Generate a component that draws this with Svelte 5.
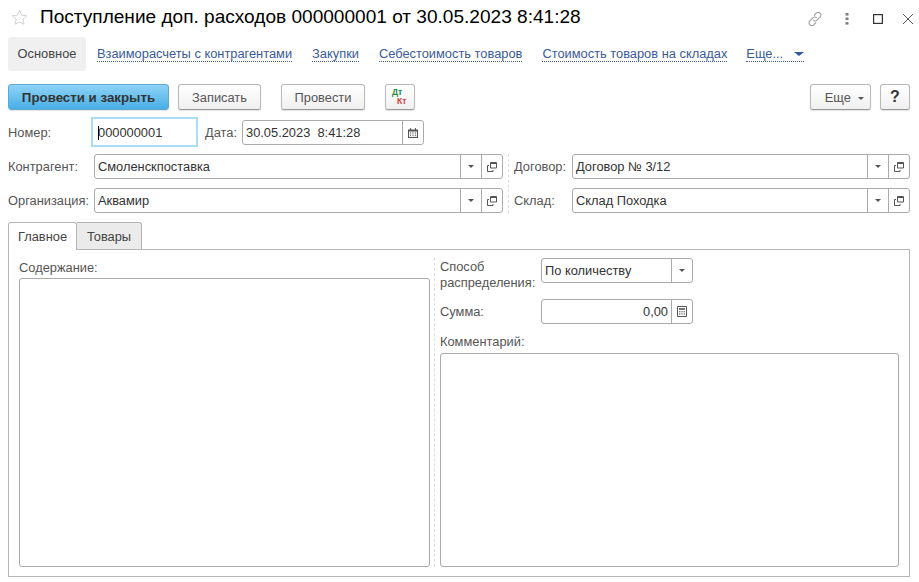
<script>
  const links = ['Взаиморасчеты с контрагентами', 'Закупки', 'Себестоимость товаров', 'Стоимость товаров на складах']
</script>

<main class="page">
  <header class="title-bar">
    <svg class="star" width="17" height="17" viewBox="0 0 18 18"><path d="M9 1.5l2.2 5.1 5.5.5-4.2 3.6 1.3 5.4L9 13.7l-4.8 2.4 1.3-5.4L1.3 7.1l5.5-.5z" fill="none" stroke="#cfcfcf"/></svg>
    <h1>Поступление доп. расходов 000000001 от 30.05.2023 8:41:28</h1>
    <div class="win-icons">
      <svg width="16" height="16" viewBox="0 0 16 16" fill="none" stroke="#a0a0a0" stroke-width="1.1"><path d="M7 4.5l2.3-2.4a2.6 2.6 0 0 1 3.7 0 2.6 2.6 0 0 1 .3 3.7L10 9.2a2.6 2.6 0 0 1-3.7 0"/><path d="M9 11.5l-2.3 2.4a2.6 2.6 0 0 1-3.7 0 2.6 2.6 0 0 1-.3-3.7L6 6.8a2.6 2.6 0 0 1 3.7 0"/></svg>
      <svg class="dots" width="4" height="12" viewBox="0 0 4 12" fill="#808080"><rect x="0.5" y="0" width="3" height="2.6"/><rect x="0.5" y="4.5" width="3" height="2.6"/><rect x="0.5" y="9" width="3" height="2.6"/></svg>
      <svg class="maxi" width="10" height="10" viewBox="0 0 10 10" fill="none" stroke="#333" stroke-width="1.2"><rect x="0.6" y="0.6" width="8.8" height="8.8"/></svg>
      <svg class="close" width="10" height="10" viewBox="0 0 10 10" stroke="#555" stroke-width="1"><path d="M0 0l10 10M10 0L0 10"/></svg>
    </div>
  </header>

  <nav class="sections">
    <span class="section active">Основное</span>
    {#each links as link}
      <a class="section" href="#top">{link}</a>
    {/each}
    <a class="section more" href="#top">Еще... <i class="more-arrow"></i></a>
  </nav>

  <div class="toolbar">
    <button class="btn primary">Провести и закрыть</button>
    <button class="btn">Записать</button>
    <button class="btn post">Провести</button>
    <button class="btn dtkt"><span class="dt">Дт</span><span class="kt">Кт</span></button>
    <span class="spacer"></span>
    <button class="btn extra">Еще <i class="caret"></i></button>
    <button class="btn help">?</button>
  </div>

  <div class="row number-row">
    <span class="label number-label">Номер:</span>
    <div class="number-input"><i class="cursor"></i>000000001</div>
    <span class="label date-label">Дата:</span>
    <div class="field date-field">
      <span class="value">30.05.2023&nbsp; 8:41:28</span>
      <span class="cell">
        <svg width="10" height="10" viewBox="0 0 10 10"><path d="M0 1.5h10V10H0z" fill="#555"/><path d="M2 0h1v2H2zM7 0h1v2H7z" fill="#555"/><path d="M1 3.5h8V9H1z" fill="#eee"/><path d="M2 4.5h1v1H2zM4.5 4.5h1v1h-1zM7 4.5h1v1H7zM2 6.8h1v1H2zM4.5 6.8h1v1h-1zM7 6.8h1v1H7z" fill="#555"/></svg>
      </span>
    </div>
  </div>

  <div class="header-grid">
    <div class="header-col left">
      {#each [['Контрагент:', 'Смоленскпоставка'], ['Организация:', 'Аквамир']] as [label, value]}
        <div class="row">
          <span class="label wide">{label}</span>
          <div class="field grow">
            <span class="value">{value}</span>
            <span class="cell"><i class="caret"></i></span>
            <span class="cell">
              <svg width="10" height="10" viewBox="0 0 10 10" fill="none" stroke="#555"><path d="M3.5 .5h6v5.5h-6z"/><path d="M3.5 1.5h6"/><path d="M2 3.5H.5v6H6V8"/></svg>
            </span>
          </div>
        </div>
      {/each}
    </div>
    <div class="header-col right">
      {#each [['Договор:', 'Договор № 3/12'], ['Склад:', 'Склад Походка']] as [label, value]}
        <div class="row">
          <span class="label narrow">{label}</span>
          <div class="field grow">
            <span class="value">{value}</span>
            <span class="cell"><i class="caret"></i></span>
            <span class="cell">
              <svg width="10" height="10" viewBox="0 0 10 10" fill="none" stroke="#555"><path d="M3.5 .5h6v5.5h-6z"/><path d="M3.5 1.5h6"/><path d="M2 3.5H.5v6H6V8"/></svg>
            </span>
          </div>
        </div>
      {/each}
    </div>
  </div>

  <div class="tabs">
    <span class="tab current">Главное</span>
    <span class="tab">Товары</span>
  </div>

  <section class="panel">
    <div class="pane content-pane">
      <span class="label">Содержание:</span>
      <div class="area"></div>
    </div>
    <div class="pane side-pane">
      <div class="side-row method">
        <span class="label two-line lowered">Способ<br />распределения:</span>
        <div class="field short">
          <span class="value">По количеству</span>
          <span class="cell"><i class="caret"></i></span>
        </div>
      </div>
      <div class="side-row sum">
        <span class="label two-line">Сумма:</span>
        <div class="field short">
          <span class="value amount">0,00</span>
          <span class="cell calc">
            <svg width="10" height="11" viewBox="0 0 10 11"><path d="M.5.5h9v10h-9z" fill="#fff" stroke="#555"/><path d="M2 2h6v2H2z" fill="#777"/><path d="M2 5.3h1.4v1H2zM4.3 5.3h1.4v1H4.3zM6.6 5.3H8v1H6.6zM2 7.6h1.4v1H2zM4.3 7.6h1.4v1H4.3zM6.6 7.6H8v1H6.6z" fill="#555"/></svg>
          </span>
        </div>
      </div>
      <span class="label comment-label">Комментарий:</span>
      <div class="area"></div>
    </div>
  </section>
</main>

<style>
  :global(body) {
    background: #fff;
  }

  .page {
    width: 919px;
    height: 582px;
    box-sizing: border-box;
    padding: 0 9px 5px 8px;
    display: flex;
    flex-direction: column;
    overflow: hidden;
    font-family: "Liberation Sans", Arial, sans-serif;
    font-size: 12.85px;
    color: #333;
  }

  .title-bar {
    height: 37px;
    display: flex;
    align-items: center;
    flex: none;
  }

  .star {
    margin: 0 0 3px 3px;
  }

  h1 {
    margin: 0 0 3px 12px;
    font-size: 19.07px;
    font-weight: 400;
    color: #000;
    white-space: nowrap;
  }

  .win-icons {
    margin-left: auto;
    display: flex;
    align-items: center;
  }

  .dots {
    margin-left: 22px;
  }

  .maxi {
    margin-left: 24px;
  }

  .close {
    margin-left: 20px;
    margin-right: -3px;
  }

  .sections {
    height: 34px;
    display: flex;
    align-items: center;
    flex: none;
  }

  .section {
    color: #3a5a9b;
    text-decoration: none;
    border-bottom: 1px dotted #3a5a9b;
    line-height: 15px;
    margin-right: 20px;
    white-space: nowrap;
  }

  .section.active {
    height: 34px;
    line-height: 34px;
    width: 78px;
    text-align: center;
    background: #f0f0f0;
    border: none;
    border-radius: 3px;
    color: #444;
    margin-right: 11px;
  }

  .more {
    margin-right: 0;
    margin-left: -1px;
  }

  .more-arrow {
    display: inline-block;
    margin-left: 7px;
    vertical-align: 2px;
    border: 5px solid transparent;
    border-top: 4px solid #2c5aa8;
    border-bottom: 0;
  }

  .toolbar {
    display: flex;
    margin-top: 13px;
    height: 26px;
    flex: none;
  }

  .spacer {
    flex: 1;
  }

  .btn {
    box-sizing: border-box;
    height: 26px;
    padding: 0;
    font: inherit;
    color: #555;
    border: 1px solid #b9b9b9;
    border-bottom-color: #999;
    border-radius: 3px;
    background: linear-gradient(#fff, #f0f0f0);
    box-shadow: 0 1px 1px rgba(0, 0, 0, 0.12);
  }

  .primary {
    width: 161px;
    font-weight: 700;
    font-size: 13.3px;
    color: #333;
    border-color: #5da9cf;
    background: linear-gradient(#8ed3f7, #49afe6);
  }

  .primary + .btn {
    width: 83px;
    margin-left: 9px;
  }

  .post {
    width: 84px;
    margin-left: 20px;
  }

  .dtkt {
    width: 30px;
    margin-left: 20px;
    position: relative;
    font-size: 8.5px;
    font-weight: 700;
  }

  .dt {
    position: absolute;
    left: 6px;
    top: 4px;
    line-height: 7px;
    color: #1c8a3c;
  }

  .kt {
    position: absolute;
    left: 11px;
    top: 13px;
    line-height: 7px;
    color: #d23c3c;
  }

  .extra {
    width: 61px;
    padding-left: 8px;
  }

  .help {
    width: 30px;
    margin-left: 9px;
    font-size: 16px;
    font-weight: 700;
    color: #333;
  }

  .caret {
    display: inline-block;
    border: 3px solid transparent;
    border-top: 3px solid #555;
    border-bottom: 0;
    vertical-align: 2px;
  }

  .extra .caret {
    margin-left: 4px;
  }

  .row {
    display: flex;
    align-items: center;
    height: 25px;
  }

  .number-row {
    margin-top: 10px;
    flex: none;
  }

  .label {
    color: #555;
    line-height: 16px;
  }

  .number-label {
    width: 83px;
  }

  .number-input {
    box-sizing: border-box;
    width: 107px;
    height: 30px;
    margin: -3px 0 -2px;
    border: 2px solid #a9def5;
    padding-left: 5px;
    line-height: 28px;
    color: #333;
    position: relative;
  }

  .cursor {
    position: absolute;
    left: 5px;
    top: 7px;
    height: 14px;
    border-left: 1px solid #000;
  }

  .date-label {
    margin-left: 7px;
    width: 37px;
  }

  .field {
    box-sizing: border-box;
    height: 25px;
    display: flex;
    border: 1px solid #aaa;
    border-radius: 3px;
    background: #fff;
  }

  .date-field {
    width: 182px;
  }

  .grow {
    flex: 1;
  }

  .short {
    width: 152px;
  }

  .value {
    flex: 1;
    padding-left: 3px;
    line-height: 23px;
    color: #333;
    white-space: nowrap;
  }

  .amount {
    text-align: right;
    padding-right: 3px;
  }

  .cell {
    width: 20px;
    border-left: 1px solid #aaa;
    display: flex;
    align-items: center;
    justify-content: center;
  }

  .cell .caret {
    vertical-align: 0;
  }

  .header-grid {
    display: flex;
    margin-top: 9px;
    flex: none;
  }

  .header-col {
    display: flex;
    flex-direction: column;
    gap: 9px;
  }

  .left {
    width: 495px;
  }

  .right {
    flex: 1;
    margin-left: 5px;
    padding-left: 5px;
    border-left: 1px dashed #ddd;
  }

  .wide {
    width: 86px;
    white-space: nowrap;
  }

  .narrow {
    width: 58px;
  }

  .tabs {
    display: flex;
    margin-top: 9px;
    height: 28px;
    position: relative;
    z-index: 1;
    flex: none;
  }

  .tab {
    box-sizing: border-box;
    width: 65px;
    height: 27px;
    text-align: center;
    line-height: 27px;
    color: #444;
    background: #ebebeb;
    border: 1px solid #b5b5b5;
    border-left: 0;
    border-bottom: 0;
    border-radius: 0 3px 0 0;
  }

  .tab.current {
    width: 69px;
    height: 28px;
    background: #fff;
    border-left: 1px solid #b5b5b5;
    border-radius: 3px 3px 0 0;
  }

  .panel {
    flex: 1;
    min-height: 0;
    margin-top: -1px;
    display: flex;
    box-sizing: border-box;
    border: 1px solid #b5b5b5;
    padding: 8px 10px 9px 10px;
  }

  .pane {
    display: flex;
    flex-direction: column;
    min-width: 0;
  }

  .content-pane {
    width: 411px;
    padding-top: 2px;
  }

  .content-pane .label {
    height: 18px;
    line-height: 16px;
  }

  .side-pane {
    flex: 1;
    margin-left: 4px;
    padding-left: 5px;
    border-left: 1px dashed #ddd;
  }

  .side-row {
    display: flex;
    flex: none;
  }

  .two-line {
    width: 101px;
    flex: none;
  }

  .lowered {
    padding-top: 1px;
  }

  .sum {
    margin-top: 8px;
    align-items: center;
  }

  .comment-label {
    margin-top: 10px;
    height: 19px;
  }

  .area {
    flex: 1;
    box-sizing: border-box;
    border: 1px solid #aaa;
    border-radius: 3px;
  }
</style>
